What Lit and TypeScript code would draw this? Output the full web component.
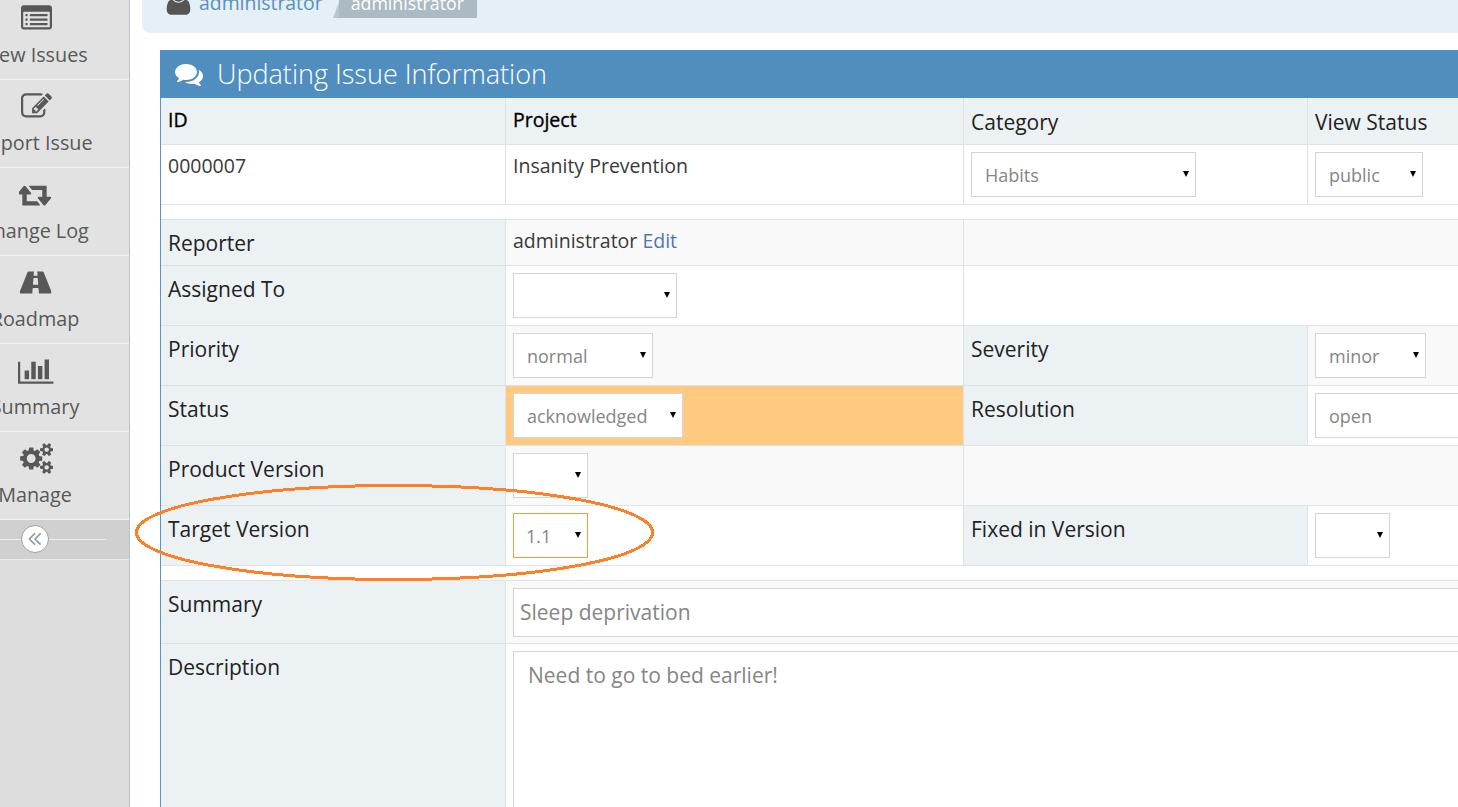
import { LitElement, html, css, svg } from "lit";
import { customElement } from "lit/decorators.js";

const ICONS: Record<string, [string, string]> = {
  list: ["0 0 1792 1792", "M384 1184v64q0 13-9.5 22.5t-22.5 9.5h-64q-13 0-22.5-9.5t-9.5-22.5v-64q0-13 9.5-22.5t22.5-9.5h64q13 0 22.5 9.5t9.5 22.5zm0-256v64q0 13-9.5 22.5t-22.5 9.5h-64q-13 0-22.5-9.5t-9.5-22.5v-64q0-13 9.5-22.5t22.5-9.5h64q13 0 22.5 9.5t9.5 22.5zm0-256v64q0 13-9.5 22.5t-22.5 9.5h-64q-13 0-22.5-9.5t-9.5-22.5v-64q0-13 9.5-22.5t22.5-9.5h64q13 0 22.5 9.5t9.5 22.5zm1152 512v64q0 13-9.5 22.5t-22.5 9.5h-960q-13 0-22.5-9.5t-9.5-22.5v-64q0-13 9.5-22.5t22.5-9.5h960q13 0 22.5 9.5t9.5 22.5zm0-256v64q0 13-9.5 22.5t-22.5 9.5h-960q-13 0-22.5-9.5t-9.5-22.5v-64q0-13 9.5-22.5t22.5-9.5h960q13 0 22.5 9.5t9.5 22.5zm0-256v64q0 13-9.5 22.5t-22.5 9.5h-960q-13 0-22.5-9.5t-9.5-22.5v-64q0-13 9.5-22.5t22.5-9.5h960q13 0 22.5 9.5t9.5 22.5zm128 704v-832q0-13-9.5-22.5t-22.5-9.5h-1472q-13 0-22.5 9.5t-9.5 22.5v832q0 13 9.5 22.5t22.5 9.5h1472q13 0 22.5-9.5t9.5-22.5zm128-1088v1088q0 66-47 113t-113 47h-1472q-66 0-113-47t-47-113v-1088q0-66 47-113t113-47h1472q66 0 113 47t47 113z"],
  edit: ["0 0 1792 1792", "M888 1184l116-116-152-152-116 116v56h96v96h56zm440-720q-16-16-33 1l-350 350q-17 17-1 33t33-1l350-350q17-17 1-33zm80 594v190q0 119-84.5 203.5t-203.5 84.5h-832q-119 0-203.5-84.5t-84.5-203.5v-832q0-119 84.5-203.5t203.5-84.5h832q63 0 117 25 15 7 18 23 3 17-9 29l-49 49q-14 14-32 8-23-6-45-6h-832q-66 0-113 47t-47 113v832q0 66 47 113t113 47h832q66 0 113-47t47-113v-126q0-13 9-22l64-64q15-15 35-7t20 29zm-96-738l288 288-672 672h-288v-288zm444 132l-92 92-288-288 92-92q28-28 68-28t68 28l152 152q28 28 28 68t-28 68z"],
  retweet: ["0 0 1920 1792", "M1216 1504q0 13-9.5 22.5t-22.5 9.5h-960q-8 0-13.5-2t-9-7-5.5-8-3-11.5-1-11.5v-600h-192q-26 0-45-19t-19-45q0-24 15-41l320-384q19-22 49-22t49 22l320 384q15 17 15 41 0 26-19 45t-45 19h-192v384h576q16 0 25 11l160 192q7 11 7 21zm640-416q0 24-15 41l-320 384q-20 23-49 23t-49-23l-320-384q-15-17-15-41 0-26 19-45t45-19h192v-384h-576q-16 0-25-12l-160-192q-7-9-7-20 0-13 9.5-22.5t22.5-9.5h960q8 0 13.5 2t9 7 5.5 8 3 11.5 1 11.5v600h192q26 0 45 19t19 45z"],
  road: ["0 0 1920 1792", "M1111 996v-4l-24-320q-1-13-11-22.5t-23-9.5h-186q-13 0-23 9.5t-11 22.5l-24 320v4q-1 12 8 20t21 8h244q12 0 21-8t8-20zm759 467q0 73-46 73h-704q13 0 22-9.5t8-22.5l-20-256q-1-13-11-22.5t-23-9.5h-272q-13 0-23 9.5t-11 22.5l-20 256q-1 13 8 22.5t22 9.5h-704q-46 0-46-73 0-54 26-116l417-1044q8-19 26-33t38-14h339q-13 0-23 9.5t-11 22.5l-15 192q-1 14 8 23t22 9h166q13 0 22-9t8-23l-15-192q-1-13-11-22.5t-23-9.5h339q20 0 38 14t26 33l417 1044q26 62 26 116z"],
  chart: ["0 0 2048 1792", "M640 896v512h-256v-512h256zm384-512v1024h-256v-1024h256zm1024 1152v128h-2048v-1280h128v1152h1920zm-640-896v768h-256v-768h256zm384-384v1152h-256v-1152h256z"],
  cogs: ["0 0 1920 1792", "M960 896q0-106-75-181t-181-75-181 75-75 181 75 181 181 75 181-75 75-181zm768 512q0-52-38-90t-90-38-90 38-38 90q0 53 37.5 90.5t90.5 37.5 90.5-37.5 37.5-90.5zm0-1024q0-52-38-90t-90-38-90 38-38 90q0 53 37.5 90.5t90.5 37.5 90.5-37.5 37.5-90.5zm-384 421v185q0 10-7 19.5t-16 10.5l-155 24q-11 35-32 76 34 48 90 115 7 11 7 20 0 12-7 19-23 30-82.5 89.5t-78.5 59.5q-11 0-21-7l-115-90q-37 19-77 31-11 108-23 155-7 24-30 24h-186q-11 0-20-7.5t-10-17.5l-23-153q-34-10-75-31l-118 89q-7 7-20 7-11 0-21-8-144-133-144-160 0-9 7-19 10-14 41-53t47-61q-23-44-35-82l-152-24q-10-1-17-9.5t-7-19.5v-185q0-10 7-19.5t16-10.5l155-24q11-35 32-76-34-48-90-115-7-11-7-20 0-12 7-20 22-30 82-89t79-59q11 0 21 7l115 90q34-18 77-32 11-108 23-154 7-24 30-24h186q11 0 20 7.5t10 17.5l23 153q34 10 75 31l118-89q8-7 20-7 11 0 21 8 144 133 144 160 0 8-7 19-12 16-42 54t-45 60q23 48 34 82l152 23q10 2 17 10.5t7 19.5zm640 533v140q0 16-149 31-12 27-30 52 51 113 51 138 0 4-4 7-122 71-124 71-8 0-46-47t-52-68q-20 2-30 2t-30-2q-14 21-52 68t-46 47q-2 0-124-71-4-3-4-7 0-25 51-138-18-25-30-52-149-15-149-31v-140q0-16 149-31 13-29 30-52-51-113-51-138 0-4 4-7 4-2 35-20t59-34 30-16q8 0 46 46.5t52 67.5q20-2 30-2t30 2q51-71 92-112l6-2q4 0 124 70 4 3 4 7 0 25-51 138 17 23 30 52 149 15 149 31zm0-1024v140q0 16-149 31-12 27-30 52 51 113 51 138 0 4-4 7-122 71-124 71-8 0-46-47t-52-68q-20 2-30 2t-30-2q-14 21-52 68t-46 47q-2 0-124-71-4-3-4-7 0-25 51-138-18-25-30-52-149-15-149-31v-140q0-16 149-31 13-29 30-52-51-113-51-138 0-4 4-7 4-2 35-20t59-34 30-16q8 0 46 46.5t52 67.5q20-2 30-2t30 2q51-71 92-112l6-2q4 0 124 70 4 3 4 7 0 25-51 138 17 23 30 52 149 15 149 31z"],
  comments: ["0 0 1792 1792", "M1408 768q0 139-94 257t-256.5 186.5-353.5 68.5q-86 0-176-16-124 88-278 128-36 9-86 16h-3q-11 0-20.5-8t-11.5-21q-1-3-1-6.5t.5-6.5 2-6l2.5-5 3.5-5.5 4-5 4.5-5 4-4.5q5-6 23-25t26-29.5 22.5-29 25-38.5 20.5-44q-124-72-195-177t-71-224q0-139 94-257t256.5-186.5 353.5-68.5 353.5 68.5 256.5 186.5 94 257zm384 256q0 120-71 224.5t-195 176.5q10 24 20.5 44t25 38.5 22.5 29 26 29.5 23 25q1 1 4 4.5t4.5 5 4 5 3.5 5.5l2.5 5 2 6 .5 6.5-1 6.5q-3 14-13 22t-22 7q-50-7-86-16-154-40-278-128-90 16-176 16-271 0-472-132 58 4 88 4 161 0 309-45t264-129q125-92 192-212t67-254q0-77-23-152 129 71 204 178t75 230z"],
};

const icon = (name: string, cls: string) => {
  const [vb, d] = ICONS[name];
  return html`<svg class=${cls} viewBox=${vb} aria-hidden="true">${svg`<path d=${d}></path>`}</svg>`;
};

const NAV = [
  ["list", "View Issues"],
  ["edit", "Report Issue"],
  ["retweet", "Change Log"],
  ["road", "Roadmap"],
  ["chart", "Summary"],
  ["cogs", "Manage"],
];

const sel = (value: string, cls: string) =>
  html`<span class="pick ${cls}"><select class="sel"><option>${value}</option></select></span>`;

@customElement("app-root")
export class AppRoot extends LitElement {
  static styles = css`
    :host {
      display: flex;
      width: 1458px;
      height: 807px;
      overflow: hidden;
      position: relative;
      background: #fff;
      font-family: "Open Sans", sans-serif;
      font-size: 19.5px;
      color: #393939;
    }
    .side {
      flex: 0 0 130px;
      box-sizing: border-box;
      background: #dcdcdc;
      border-right: 1px solid #b3c4d1;
      overflow: hidden;
    }
    .nav { margin-top: -8px; }
    .item {
      height: 87px;
      background: #e2e2e2;
      border-bottom: 1px solid #f5f5f5;
      display: flex;
      flex-direction: column;
      align-items: center;
      padding-right: 59px;
      color: #585858;
    }
    .ic {
      height: 31px;
      margin: 11px 0 0 2px;
      fill: #585858;
      flex: none;
    }
    .lab { white-space: nowrap; line-height: 28px; margin-top: 7px; font-size: 19.8px; }
    .collapse {
      height: 39px;
      background: #d0d0d0;
      border-bottom: 1px solid #ececec;
      display: flex;
      align-items: center;
      position: relative;
    }
    .collapse .line { width: 106px; height: 1px; background: #f0f0f0; }
    .knob {
      position: absolute;
      left: 21px;
      top: 5px;
      width: 28px;
      height: 28px;
      box-sizing: border-box;
      border-radius: 50%;
      border: 1px solid #a0a0a0;
      background: #fff;
      display: flex;
      align-items: center;
      justify-content: center;
    }
    .knob svg { width: 18px; height: 18px; fill: none; stroke: #8b9aa6; stroke-width: 1.4; }
    .main { flex: 1; min-width: 0; overflow: hidden; }
    .crumbs {
      margin-left: 12px;
      height: 33px;
      background: #e4eff6;
      border-bottom-left-radius: 8px;
      display: flex;
      align-items: flex-end;
      overflow: hidden;
      box-sizing: border-box;
      padding: 0 0 16px 20px;
      white-space: nowrap;
    }
    .uicon { width: 33px; height: 33px; fill: #555; flex: none; margin-right: 4px; }
    .uicon .head { stroke: #e4eff6; stroke-width: 60; }
    .uname {
      color: #5b8fc0;
      font-size: 19.4px;
      line-height: 28px;
    }
    .badge {
      position: relative;
      margin-left: 16px;
      background: #abbac3;
      color: #fff;
      padding: 4px 13px 0 12px;
      height: 32px;
      box-sizing: border-box;
      line-height: 26px;
      margin-bottom: -1px;
      font-size: 17.8px;
    }
    .badge::before {
      content: "";
      position: absolute;
      left: -6px;
      bottom: 0;
      border-right: 6px solid #abbac3;
      border-top: 16px solid transparent;
      opacity: 0.75;
    }
    .form { margin: 17px 0 0 30px; width: 1400px; }
    .title {
      height: 48px;
      background: #4f8ebf;
      color: #fff;
      display: flex;
      align-items: center;
      font-size: 27px;
      font-weight: 300;
      padding-left: 15px;
      gap: 14px;
    }
    .title svg { width: 28px; height: 28px; fill: #fff; flex: none; }
    .title span { padding-bottom: 2px; }
    .body { border-left: 1px solid #5b94c3; }
    .row {
      display: grid;
      grid-template-columns: 345px 458px 344px 1fr;
      border-bottom: 1px solid #dfe2e4;
    }
    .row > div {
      padding: 7px;
      border-right: 1px solid #dfe2e4;
      box-sizing: border-box;
      line-height: 27px;
      min-width: 0;
      white-space: nowrap;
    }
    .row > div:last-child { border-right: 0; }
    .h45 { height: 45px; }
    .h59 { height: 59px; }
    .head { height: 46px; }
    .row.head > div { background: #ecf1f4; color: #222; font-size: 21px; padding-top: 11px; }
    .row.head > .th {
      padding-top: 8px;
      font-size: 19.5px;
      color: #000;
      -webkit-text-stroke: 0.35px #000;
    }
    .row > .lb { background: #ecf1f4; color: #222; font-size: 21px; padding-top: 10px; }
    .odd { background: #f9f9f9; }
    .wide { grid-column: 2 / span 3; }
    .wide2 { grid-column: 3 / span 2; }
    .orange { background: #ffc97f; }
    .gap { height: 14px; border-bottom: 1px solid #dfe2e4; }
    .pick { display: block; position: relative; }
    .pick::after {
      content: "";
      position: absolute;
      right: 7px;
      top: 19px;
      border-top: 6px solid #000;
      border-left: 3px solid transparent;
      border-right: 3px solid transparent;
      pointer-events: none;
    }
    .sel {
      display: block;
      width: 100%;
      height: 45px;
      box-sizing: border-box;
      border: 1px solid #d5d5d5;
      background: #fff;
      font-family: "Open Sans", sans-serif;
      font-size: 18px;
      color: #858585;
      padding: 1px 8px 0 13px;
      border-radius: 0;
      outline: none;
      appearance: none;
    }
    .w225 { width: 225px; }
    .w108 { width: 108px; }
    .w164 { width: 164px; }
    .w140 { width: 140px; }
    .w111 { width: 111px; }
    .w170 { width: 170px; }
    .w75 { width: 75px; }
    .focus .sel { border-color: #f59942; padding-left: 12px; }
    .res {
      height: 45px;
      width: 300px;
      box-sizing: border-box;
      border: 1px solid #d5d5d5;
      background: #fff;
      color: #858585;
      font-size: 18px;
      padding: 9px 13px 0;
      line-height: 26px;
    }
    a { color: #4c78b0; text-decoration: none; }
    .sum { height: 62px; grid-template-rows: 62px; }
    .inp {
      display: block;
      width: 1000px;
      height: 49px;
      box-sizing: border-box;
      border: 1px solid #d5d5d5;
      font-family: "Open Sans", sans-serif;
      font-size: 21px;
      color: #858585;
      padding: 0 6px 2px;
      outline: none;
    }
    .ta {
      display: block;
      width: 1000px;
      height: 300px;
      box-sizing: border-box;
      border: 1px solid #d5d5d5;
      font-family: "Open Sans", sans-serif;
      font-size: 21px;
      line-height: 28px;
      color: #858585;
      padding: 9px 14px;
      outline: none;
      resize: none;
    }
    .desc { height: 400px; }
    .ring { position: absolute; left: 130px; top: 480px; width: 530px; height: 105px; pointer-events: none; }
    .ring ellipse { fill: none; stroke: #ff7f27; stroke-width: 3; shape-rendering: crispEdges; }
  `;

  render() {
    return html`
      <aside class="side">
        <div class="nav">
          ${NAV.map(
            ([i, l]) => html`<div class="item">${icon(i, "ic")}<span class="lab">${l}</span></div>`
          )}
        </div>
        <div class="collapse">
          <div class="line"></div>
          <div class="knob">
            <svg viewBox="0 0 16 16"><path d="M8 3 3 8l5 5M13 3 8 8l5 5"></path></svg>
          </div>
        </div>
      </aside>
      <main class="main">
        <div class="crumbs">
          <svg class="uicon" viewBox="0 0 1792 1792" aria-hidden="true">
            <path d="M1536 1399q0 109-62.5 187t-150.5 78h-854q-88 0-150.5-78t-62.5-187q0-85 8.5-160.5t31.5-152 58.5-131 94-89 134.5-34.5q131 128 313 128t313-128q76 0 134.5 34.5t94 89 58.5 131 31.5 152 8.5 160.5z"></path>
            <circle class="head" cx="896" cy="610" r="384"></circle>
          </svg>
          <span class="uname">administrator</span>
          <span class="badge">administrator</span>
        </div>
        <section class="form">
          <div class="title">${icon("comments", "")}<span>Updating Issue Information</span></div>
          <div class="body">
            <div class="row head">
              <div class="th">ID</div><div class="th">Project</div><div>Category</div><div>View Status</div>
            </div>
            <div class="row h59">
              <div>0000007</div><div>Insanity Prevention</div>
              <div>${sel("Habits", "w225")}</div><div>${sel("public", "w108")}</div>
            </div>
            <div class="gap"></div>
            <div class="row h45">
              <div class="lb">Reporter</div><div class="odd">administrator <a>Edit</a></div><div class="odd wide2"></div>
            </div>
            <div class="row h59">
              <div class="lb">Assigned To</div><div>${sel("", "w164")}</div><div class="wide2"></div>
            </div>
            <div class="row h59">
              <div class="lb">Priority</div><div class="odd">${sel("normal", "w140")}</div>
              <div class="lb">Severity</div><div class="odd">${sel("minor", "w111")}</div>
            </div>
            <div class="row h59">
              <div class="lb">Status</div><div class="orange">${sel("acknowledged", "w170")}</div>
              <div class="lb">Resolution</div><div><div class="res">open</div></div>
            </div>
            <div class="row h59">
              <div class="lb">Product Version</div><div class="odd">${sel("", "w75")}</div><div class="odd wide2"></div>
            </div>
            <div class="row h59">
              <div class="lb">Target Version</div><div>${sel("1.1", "w75 focus")}</div>
              <div class="lb">Fixed in Version</div><div>${sel("", "w75")}</div>
            </div>
            <div class="gap"></div>
            <div class="row sum">
              <div class="lb">Summary</div><div class="wide odd"><input class="inp" .value=${"Sleep deprivation"} /></div>
            </div>
            <div class="row desc">
              <div class="lb">Description</div><div class="wide"><textarea class="ta" .value=${"Need to go to bed earlier!"}></textarea></div>
            </div>
          </div>
        </section>
      </main>
      <svg class="ring" viewBox="130 480 530 105" aria-hidden="true">
        <ellipse cx="394.5" cy="532.5" rx="258" ry="47"></ellipse>
      </svg>
    `;
  }
}
